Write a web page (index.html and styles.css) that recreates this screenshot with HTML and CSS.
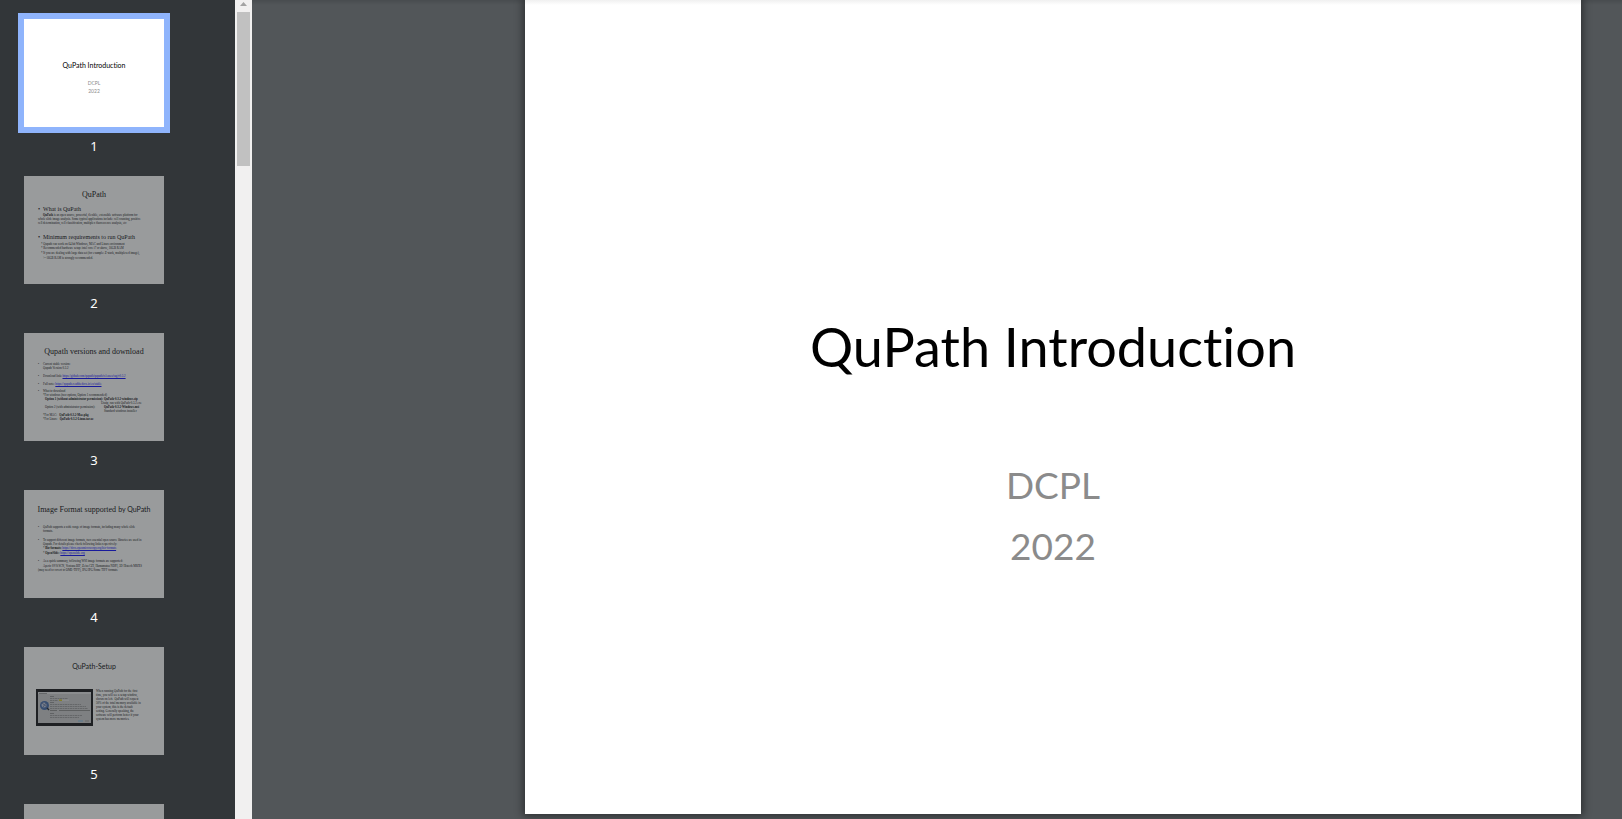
FILE: index.html
```html
<!DOCTYPE html>
<html lang="en">
<head>
<meta charset="utf-8">
<title>QuPath Introduction</title>
<link rel="stylesheet" href="styles.css">
</head>
<body>
<nav class="sidebar" aria-label="Page thumbnails">
  <div class="thumb current">
    <div class="slide cover">
      <p class="sans-title">QuPath Introduction</p>
      <p class="sub">DCPL</p>
      <p class="sub">2022</p>
    </div>
    <span class="number">1</span>
  </div>
  <div class="thumb">
    <div class="slide">
      <p class="serif-title">QuPath</p>
      <p class="head mt5 bullet">What is QuPath</p>
      <p class="in19"><b>QuPath</b> is an open source, powerful, flexible, extensible software platform for</p>
      <p class="in14">whole slide image analysis. Some typical applications include: cell counting, positive</p>
      <p class="in14">cell determination, cell classification, multiplex fluorescence analysis, etc</p>
      <p class="head mt8 bullet">Minimum requirements to run QuPath</p>
      <p class="in17 mt1">* Qupath can work on 64 bit Windows, MAC and Linux environment</p>
      <p class="in17">* Recommended hardware setup: intel core i7 or above, 16GB RAM</p>
      <p class="in17 mt1">* If you are dealing with large data set (for example: Z-stack, multiplexed image),</p>
      <p class="in19 mt1">&gt;=16GB RAM is strongly recommended.</p>
    </div>
    <span class="number">2</span>
  </div>
  <div class="thumb">
    <div class="slide">
      <p class="serif-title">Qupath versions and download</p>
      <p class="bullet mt5">Current stable version:</p>
      <p class="in19">Qupath Version 0.3.2</p>
      <p class="bullet mt4">Download link: <a href="#download">https://github.com/qupath/qupath/releases/tag/v0.3.2</a></p>
      <p class="bullet mt4">Full note: <a href="#notes">https://qupath.readthedocs.io/en/stable</a></p>
      <p class="bullet mt3">What to download</p>
      <p class="in19">*For windows (two options, Option 1 recommended)</p>
      <p class="in21 pair"><b>Option 1 (without administrator permission):</b><b>QuPath-0.3.2-windows.zip</b></p>
      <p class="in77">Unzip, run with QuPath-0.3.2.exe</p>
      <p class="in21 pair"><span>Option 2 (with administrator permission):</span><b>QuPath-0.3.2-Windows.msi</b></p>
      <p class="in80">Standard windows installer</p>
      <p class="in19">*For MAC: &nbsp; <b>QuPath-0.3.2-Mac.pkg</b></p>
      <p class="in19">*For Linux: &nbsp; <b>QuPath-0.3.2-Linux.tar.xz</b></p>
    </div>
    <span class="number">3</span>
  </div>
  <div class="thumb">
    <div class="slide">
      <p class="serif-title">Image Format supported <span class="sans">by QuPath</span></p>
      <p class="bullet mt10">QuPath supports a wide range of image formats, including many whole slide</p>
      <p class="in19">formats.</p>
      <p class="bullet mt5">To support different image formats, two essential open source libraries are used in</p>
      <p class="in19">Qupath. For details please check following links respectively:</p>
      <p class="in19">* <b>Bio-formats:</b> <a href="#bioformats">https://docs.openmicroscopy.org/bio-formats</a></p>
      <p class="in19 mt1">* <b>OpenSlide:</b> <a href="#openslide">https://openslide.org</a></p>
      <p class="bullet mt4">As a quick summary, following WSI image formats are supported:</p>
      <p class="in19 mt1">Aperio SVS/SCN, Ventana BIF, Zeiss CZI, Hamamatsu NDPI, 3D Histech MRXS</p>
      <p class="in14">(may need to covert to OME-TIFF), JPG/JPG/Some TIFF formats</p>
    </div>
    <span class="number">4</span>
  </div>
  <div class="thumb">
    <div class="slide">
      <p class="sans-title">QuPath-Setup</p>
      <div class="setup">
        <svg viewBox="0 0 57 37" role="img" aria-label="Setup window">
          <rect width="57" height="37" fill="#0c0c0f"/>
          <rect x="2" y="3" width="53" height="31" fill="#c9cacb"/>
          <rect x="2" y="3" width="53" height="2" fill="#e4e4e4"/>
          <circle cx="8.500" cy="16.500" r="4.500" fill="#3d66a8"/>
          <circle cx="8" cy="16" r="2.500" fill="#b9c8e4"/>
          <path d="M6 14l5 4M7 18l3-4" stroke="#67789d"/>
          <path d="M11 19l2 2" stroke="#161f30" stroke-width="1.500"/>
          <path d="M3 4.500h8M14 7.500h4M14 13.500h4M14 24.500h4" stroke="#666" stroke-width=".6"/>
          <path d="M14 9.500h18M14 11.500h8M14 15.500h31M14 17.500h36M14 19.500h38M14 26.500h32M14 28.500h29" stroke="#777" stroke-width=".6" stroke-dasharray="2 .5"/>
          <rect x="23" y="10.500" width="3" height="1.500" fill="#d5c51b"/>
          <rect x="26" y="10.500" width="7" height="1.500" fill="#dedede"/>
          <path d="M14 21.500h7M23 21.500h31" stroke="#888"/>
          <rect x="42" y="31" width="5" height="2" fill="#a4c2d6"/>
          <rect x="49" y="31" width="4" height="2" fill="#b2b2b2"/>
        </svg>
        <div>
          <p>When running QuPath for the first</p>
          <p>time, you will see a setup window,</p>
          <p>shown on left. &nbsp;QuPath will request</p>
          <p>50% of the total memory available in</p>
          <p>your system, this is the default</p>
          <p>setting. Generally speaking, the</p>
          <p>software will perform better if your</p>
          <p>system has more memories.</p>
        </div>
      </div>
    </div>
    <span class="number">5</span>
  </div>
  <div class="thumb">
    <div class="slide"></div>
  </div>
</nav>
<div class="scrollbar" aria-hidden="true">
  <svg class="arrow" viewBox="0 0 7 4"><path d="M3.500 0L7 4H0z" fill="#a3a3a3"/></svg>
  <div class="grip"></div>
</div>
<main class="viewer">
  <article class="page">
    <h1>QuPath Introduction</h1>
    <p>DCPL</p>
    <p>2022</p>
  </article>
</main>
</body>
</html>
```
FILE: styles.css
```css
* {
  box-sizing: border-box;
}

body {
  display: flex;
  height: 100vh;
  margin: 0;
  overflow: hidden;
  background: #525659;
  font-family: Lato, "Liberation Sans", sans-serif;
  font-variant-ligatures: none;
}

p,
h1 {
  margin: 0;
}

/* Thumbnail strip */
.sidebar {
  flex: 0 0 235px;
  padding: 19px 0 0 24px;
  overflow: hidden;
  background: #323639;
}

.thumb {
  width: 140px;
  margin-bottom: 20px;
}

.slide {
  height: 108px;
  padding-top: 14px;
  overflow: hidden;
  background: #fff;
  color: #000;
  opacity: 0.5;
  font: 3px/4px "Liberation Serif", serif;
  font-variant-ligatures: none;
  white-space: nowrap;
}

.current .slide {
  opacity: 1;
  box-shadow: 0 0 0 6px #8fb4fc;
}

.number {
  display: block;
  padding-top: 9px;
  color: #fff;
  font: 400 13px/20px "Noto Sans", sans-serif;
  text-align: center;
}

.serif-title {
  font-size: 8px;
  line-height: 10px;
  text-align: center;
}

.sans {
  font-family: Lato, sans-serif;
  font-size: 7px;
}

.sans-title {
  font-family: Lato, sans-serif;
  font-size: 7px;
  line-height: 10px;
  text-align: center;
}

.cover {
  padding-top: 41px;
}

.cover .sans-title {
  margin-bottom: 9px;
}

.sub {
  color: #8b8b8b;
  font-family: Lato, sans-serif;
  font-size: 5px;
  line-height: 8px;
  text-align: center;
}

.head {
  font-size: 6px;
  line-height: 8px;
}

.bullet {
  padding-left: 14px;
}

.bullet::before {
  content: "•";
  display: inline-block;
  width: 5px;
}

.in14 { padding-left: 14px; }
.in17 { padding-left: 17px; }
.in19 { padding-left: 19px; }
.in21 { padding-left: 21px; }
.in77 { padding-left: 77px; }
.in80 { padding-left: 80px; }

.mt1 { margin-top: 1px; }
.mt3 { margin-top: 3px; }
.mt4 { margin-top: 4px; }
.mt5 { margin-top: 5px; }
.mt8 { margin-top: 8px; }
.mt10 { margin-top: 10px; }

.pair {
  display: flex;
}

.pair :first-child {
  width: 59px;
}

.slide a {
  color: #00f;
}

.setup {
  display: flex;
  gap: 3px;
  padding: 18px 0 0 12px;
}

.setup svg {
  width: 57px;
  height: 37px;
}

/* Scroll bar */
.scrollbar {
  flex: 0 0 17px;
  padding: 2px 2px 0;
  background: #f1f0f0;
}

.arrow {
  display: block;
  width: 7px;
  height: 4px;
  margin: 0 auto 6px;
}

.grip {
  height: 154px;
  background: #c1c1c1;
}

/* Document area */
.viewer {
  flex: 1;
  display: grid;
  grid-template-columns: 273fr 1056fr 41fr;
  align-items: start;
  background: linear-gradient(#484c4f, #525659 5px);
}

.page {
  grid-column: 2;
  aspect-ratio: 1056 / 814;
  padding-top: 307px;
  background: linear-gradient(#f0f0f0, #fff 5px);
  box-shadow: 0 0 8px 2px rgba(0, 0, 0, 0.45);
  text-align: center;
}

.page h1 {
  margin-bottom: 67px;
  color: #000;
  font-size: 54px;
  font-weight: 400;
  line-height: 80px;
}

.page p {
  color: #8b8b8b;
  font-size: 37px;
  line-height: 61px;
}
```
